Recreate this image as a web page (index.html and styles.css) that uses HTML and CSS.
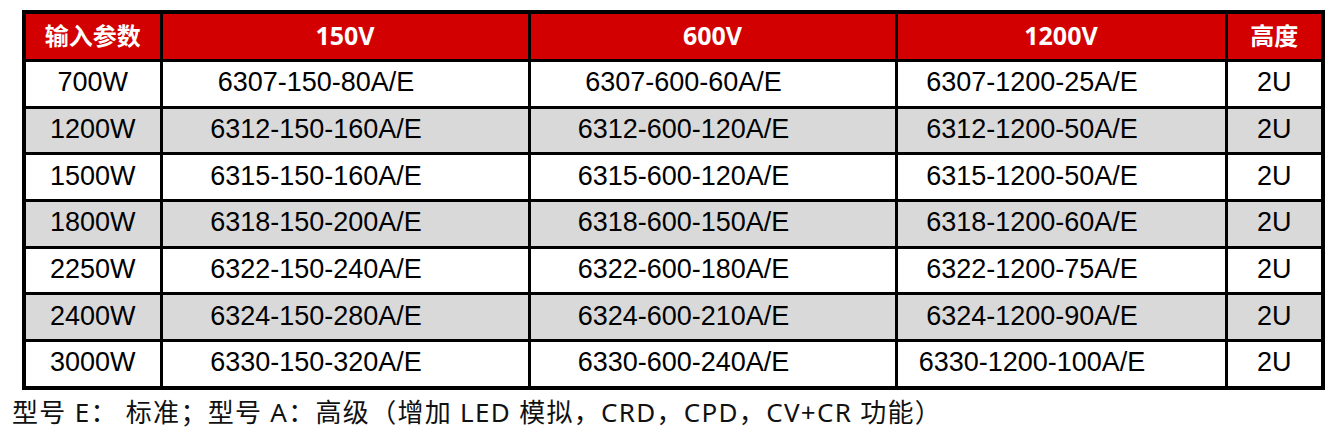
FILE: index.html
```html
<!DOCTYPE html>
<html lang="zh-CN">
<head>
<meta charset="utf-8">
<title>型号表</title>
<link rel="stylesheet" href="styles.css">
</head>
<body>
<div class="page">
  <table class="spec">
    <colgroup>
      <col class="c-power">
      <col class="c-v150">
      <col class="c-v600">
      <col class="c-v1200">
      <col class="c-height">
    </colgroup>
    <thead>
      <tr>
        <th class="cjk">输入参数</th>
        <th>150V</th>
        <th>600V</th>
        <th>1200V</th>
        <th class="cjk">高度</th>
      </tr>
    </thead>
    <tbody>
      <tr><td>700W</td><td class="model">6307-150-80A/E</td><td class="model">6307-600-60A/E</td><td class="model">6307-1200-25A/E</td><td>2U</td></tr>
      <tr class="alt"><td>1200W</td><td class="model">6312-150-160A/E</td><td class="model">6312-600-120A/E</td><td class="model">6312-1200-50A/E</td><td>2U</td></tr>
      <tr><td>1500W</td><td class="model">6315-150-160A/E</td><td class="model">6315-600-120A/E</td><td class="model">6315-1200-50A/E</td><td>2U</td></tr>
      <tr class="alt"><td>1800W</td><td class="model">6318-150-200A/E</td><td class="model">6318-600-150A/E</td><td class="model">6318-1200-60A/E</td><td>2U</td></tr>
      <tr><td>2250W</td><td class="model">6322-150-240A/E</td><td class="model">6322-600-180A/E</td><td class="model">6322-1200-75A/E</td><td>2U</td></tr>
      <tr class="alt"><td>2400W</td><td class="model">6324-150-280A/E</td><td class="model">6324-600-210A/E</td><td class="model">6324-1200-90A/E</td><td>2U</td></tr>
      <tr><td>3000W</td><td class="model">6330-150-320A/E</td><td class="model">6330-600-240A/E</td><td class="model">6330-1200-100A/E</td><td>2U</td></tr>
    </tbody>
  </table>
  <p class="note">型号 E： 标准；型号 A：高级（增加 LED 模拟，CRD，CPD，CV+CR 功能）</p>
</div>
</body>
</html>
```

FILE: styles.css
```css
html, body {
  margin: 0;
  padding: 0;
  background: #ffffff;
}

.page {
  padding: 10px 0 0 22px;
}

.spec {
  border-collapse: collapse;
  table-layout: fixed;
  width: 1302px;
  border: 4px solid #000;
  font-family: "Liberation Sans", Arial, sans-serif;
  font-size: 27px;
  color: #000;
}

.c-power { width: 137px; }
.c-v150 { width: 368px; }
.c-v600 { width: 367px; }
.c-v1200 { width: 330px; }
.c-height { width: 97px; }

.spec th,
.spec td {
  border: 3px solid #000;
  padding: 0;
  text-align: center;
  vertical-align: middle;
  white-space: nowrap;
}

.spec th {
  background: #d20000;
  color: #ffffff;
  font-family: "Open Sans", "Noto Sans CJK SC", sans-serif;
  font-weight: 700;
  font-size: 25px;
  height: 42px;
  line-height: 30px;
  padding-bottom: 3px;
}

.spec th.cjk {
  font-family: "Noto Sans CJK SC", sans-serif;
  font-size: 24px;
}

.spec td {
  height: 40.7px;
  line-height: 30px;
  padding-bottom: 3px;
}

.spec td.model {
  padding-right: 58px;
}

.spec tr.alt td {
  background: #d9d9d9;
}

.note {
  margin: 6px 0 0 -10px;
  font-family: "Noto Sans", "Noto Sans CJK SC", sans-serif;
  font-size: 26px;
  line-height: 32px;
  color: #111;
  text-spacing-trim: space-all;
  letter-spacing: 1.3px;
}
```
